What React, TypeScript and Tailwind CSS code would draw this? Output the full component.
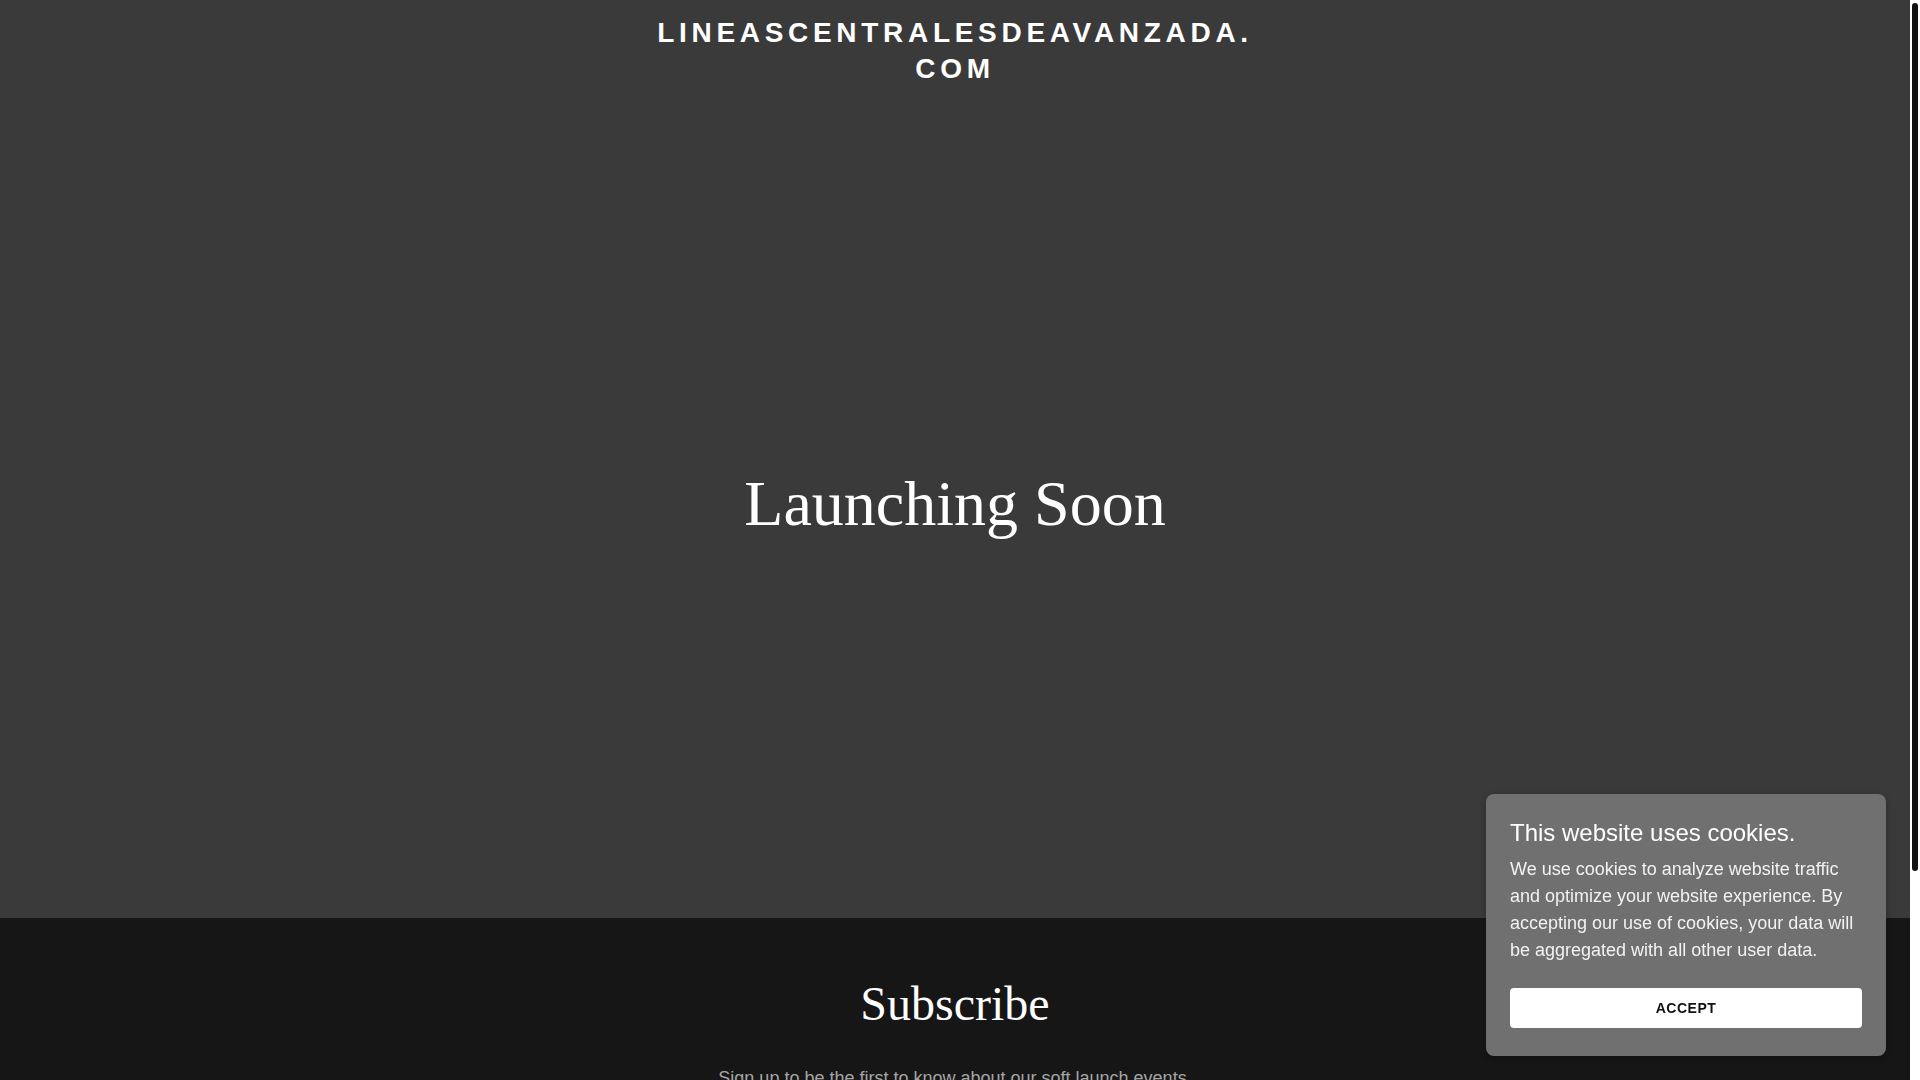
import React from 'react';

const sans = { fontFamily: '"Liberation Sans", Arial, sans-serif' };

export default function App() {
  return (
    <div className="flex h-[1080px] overflow-hidden bg-white" style={sans}>
      <main className="h-full flex-1 overflow-y-auto">
        {/* Hero */}
        <section className="flex h-[918px] flex-col bg-[#3a3a3a]">
          <header className="pt-[15px] text-center">
            <h1 className="text-[28px] font-bold uppercase leading-[36px] tracking-[4.7px] text-white">
              LINEASCENTRALESDEAVANZADA.
              <br />
              COM
            </h1>
          </header>
          <div className="flex flex-1 items-center justify-center pt-[3px]">
            <h2 className="text-[64px] font-normal text-white [font-family:'Liberation_Serif',Times,serif]">
              Launching Soon
            </h2>
          </div>
        </section>

        {/* Subscribe */}
        <section className="flex h-[425px] flex-col items-center bg-[#161616] pt-[56px]">
          <h2 className="text-[48px] leading-[60px] text-white [font-family:'Liberation_Serif',Times,serif]">
            Subscribe
          </h2>
          <p className="mt-[31px] text-[18px] leading-[27px] text-[#a5a5a5]">
            Sign up to be the first to know about our soft launch events.
          </p>
          <form className="mt-8 flex w-[560px] flex-col gap-4">
            <input
              className="h-[56px] rounded border border-[#555] bg-[#161616] px-4 text-[16px] text-white"
              placeholder="Email"
            />
            <button type="button" className="h-[48px] rounded bg-white text-[14px] font-bold tracking-[1px] text-black">
              SIGN UP
            </button>
          </form>
        </section>
      </main>

      {/* Scrollbar */}
      <aside className="h-full w-[10px] shrink-0 bg-white pt-[3px]">
        <div className="mx-auto h-[868px] w-[6px] rounded-full bg-[#111111]" />
      </aside>

      {/* Cookie notice */}
      <div className="fixed bottom-6 right-[34px] w-[400px] rounded-lg bg-[#707070] px-6 pt-6 pb-7 shadow-[0_2px_6px_rgba(0,0,0,0.3)]">
        <h3 className="mb-[8px] text-[24px] leading-[30px] text-white">This website uses cookies.</h3>
        <p className="text-[18px] leading-[27px] text-[#f2f2f2]">
          We use cookies to analyze website traffic and optimize your website experience. By accepting our use of
          cookies, your data will be aggregated with all other user data.
        </p>
        <button
          type="button"
          className="mt-[24px] h-[40px] w-full rounded-[4px] bg-white text-[14px] font-bold tracking-[0.5px] text-[#111]"
        >
          ACCEPT
        </button>
      </div>
    </div>
  );
}
